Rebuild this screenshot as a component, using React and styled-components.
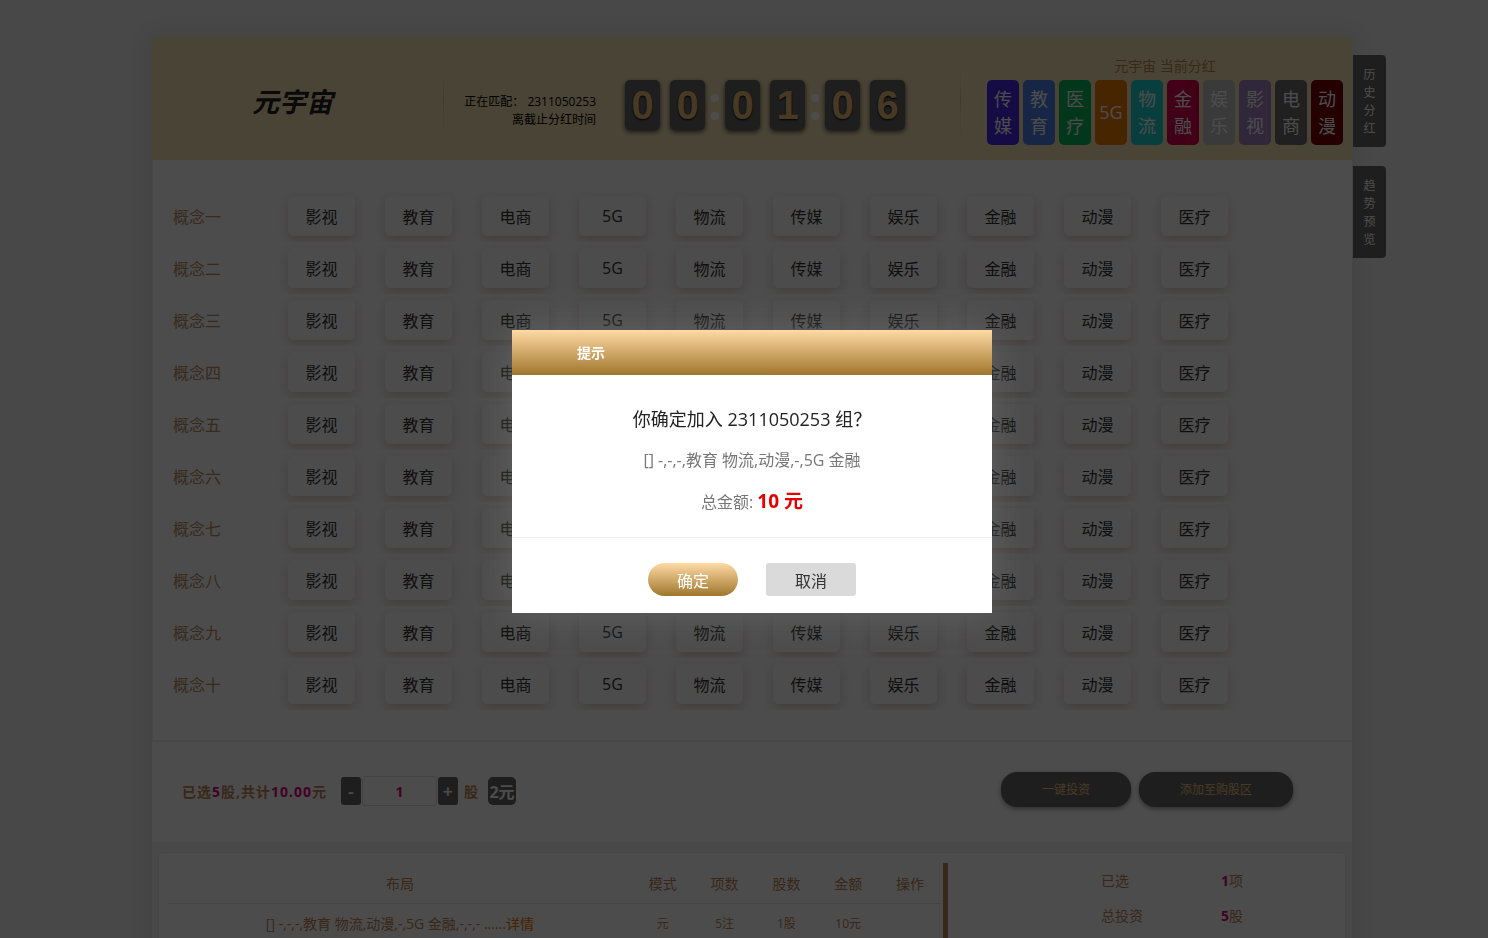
import React, { useState } from "react";
import styled, { createGlobalStyle } from "styled-components";

const concepts = ["一", "二", "三", "四", "五", "六", "七", "八", "九", "十"];
const sectors = ["影视", "教育", "电商", "5G", "物流", "传媒", "娱乐", "金融", "动漫", "医疗"];

const results = [
  { name: "传媒", color: "#4b28e8" },
  { name: "教育", color: "#4d80e8" },
  { name: "医疗", color: "#07b85c" },
  { name: "5G", color: "#ef7c00" },
  { name: "物流", color: "#1fcfcf" },
  { name: "金融", color: "#d9004f" },
  { name: "娱乐", color: "#c2c2c2" },
  { name: "影视", color: "#a583c4" },
  { name: "电商", color: "#6b6b6b" },
  { name: "动漫", color: "#780000" },
];

const App = () => {
  const [count, setCount] = useState(1);

  return (
    <>
      <GlobalStyle />
      <Page>
        <Main>
          <Header>
            <Logo>元宇宙</Logo>
            <Timer>
              <TimerText>
                正在匹配： 2311050253
                <br />
                离截止分红时间
              </TimerText>
              <Clock>
                <Digit>0</Digit>
                <Digit>0</Digit>
                <Dots />
                <Digit>0</Digit>
                <Digit>1</Digit>
                <Dots />
                <Digit>0</Digit>
                <Digit>6</Digit>
              </Clock>
            </Timer>
            <Current>
              <CurrentTitle>元宇宙 当前分红</CurrentTitle>
              <Results>
                {results.map((item) => (
                  <Result key={item.name} $color={item.color}>
                    {item.name}
                  </Result>
                ))}
              </Results>
            </Current>
          </Header>

          <Board>
            {concepts.map((num) => (
              <Row key={num}>
                <RowLabel>概念{num}</RowLabel>
                {sectors.map((name) => (
                  <Sector key={name} type="button">
                    {name}
                  </Sector>
                ))}
              </Row>
            ))}
          </Board>

          <Controls>
            <Summary>
              已选<Pink>5</Pink>股,共计<Pink>10.00</Pink>元
            </Summary>
            <Stepper>
              <Step type="button" onClick={() => setCount(Math.max(1, count - 1))}>
                -
              </Step>
              <Count
                type="text"
                aria-label="股"
                value={count}
                onChange={(e) => setCount(Number(e.target.value) || 1)}
              />
              <Step type="button" onClick={() => setCount(count + 1)}>
                +
              </Step>
            </Stepper>
            <Unit>股</Unit>
            <Price type="button">2元</Price>
            <Actions>
              <Action type="button">一键投资</Action>
              <Action type="button">添加至购股区</Action>
            </Actions>
          </Controls>

          <Cart>
            <CartInner>
              <Table>
                <thead>
                  <tr>
                    <th className="wide">布局</th>
                    <th>模式</th>
                    <th>项数</th>
                    <th>股数</th>
                    <th>金额</th>
                    <th>操作</th>
                  </tr>
                </thead>
                <tbody>
                  <tr>
                    <td className="wide">
                      [] -,-,-,教育 物流,动漫,-,5G 金融,-,-,- ......<a href="#detail">详情</a>
                    </td>
                    <td>元</td>
                    <td>5注</td>
                    <td>1股</td>
                    <td>10元</td>
                    <td></td>
                  </tr>
                </tbody>
              </Table>
              <Totals>
                <dt>已选</dt>
                <dd>
                  <Pink>1</Pink>项
                </dd>
                <dt>总投资</dt>
                <dd>
                  <Pink>5</Pink>股
                </dd>
              </Totals>
            </CartInner>
          </Cart>
        </Main>

        <Side>
          <SideTab type="button">历史分红</SideTab>
          <SideTab type="button">趋势预览</SideTab>
        </Side>
      </Page>

      <Overlay>
        <Dialog role="dialog" aria-labelledby="dialog-title">
          <DialogHead id="dialog-title">提示</DialogHead>
          <DialogBody>
            <h3>你确定加入 2311050253 组？</h3>
            <p>[] -,-,-,教育 物流,动漫,-,5G 金融</p>
            <p>
              总金额: <strong>10 元</strong>
            </p>
          </DialogBody>
          <DialogFoot>
            <DialogButton type="button" $primary>
              确定
            </DialogButton>
            <DialogButton type="button">取消</DialogButton>
          </DialogFoot>
        </Dialog>
      </Overlay>
    </>
  );
};

export default App;

const GlobalStyle = createGlobalStyle`
  * {
    box-sizing: border-box;
  }

  body {
    margin: 0;
    overflow: hidden;
    background: #f0f0f0;
    color: #333;
    font-family: "Open Sans", "Noto Sans CJK SC", sans-serif;
    font-size: 14px;
  }

  button,
  input {
    padding: 0;
    border: 0;
    font-family: inherit;
  }

  h1, h2, h3, p, dl, dd {
    margin: 0;
  }
`;

/* no scrolling behind the open dialog */
const Page = styled.div`
  display: grid;
  grid-template-columns: 1fr minmax(0, 1200px) 1fr;
  align-items: start;
  height: 100vh;
  padding: 37px 0 0 16px;
  overflow: hidden;
`;

const Main = styled.main`
  grid-column: 2;
  background: #fff;
  box-shadow: 0 0 20px rgba(150, 90, 90, 0.2);
`;

const Header = styled.header`
  display: flex;
  height: 123px;
  background: #f8e5b5;
`;

const Logo = styled.h1`
  width: 291px;
  padding-left: 100px;
  color: #222;
  font-size: 27px;
  font-style: italic;
  line-height: 130px;
`;

const Timer = styled.div`
  flex: 1;
  display: flex;
  padding: 43px 0 0 18px;
  border-style: solid;
  border-width: 0 1px;
  border-image: linear-gradient(transparent 25%, #d8c79c 50%, transparent 85%) 1;
`;

const TimerText = styled.p`
  width: 134px;
  margin-top: 13px;
  color: #000;
  font-size: 12px;
  line-height: 18px;
  text-align: right;
  white-space: nowrap;
`;

const Clock = styled.div`
  display: flex;
  margin-left: 24px;
`;

const Digit = styled.span`
  width: 35px;
  height: 50px;
  margin: 0 5px;
  border-radius: 5px;
  background: #666;
  box-shadow: 0 2px 5px rgba(0, 0, 0, 0.7);
  color: #f0be78;
  font: bold 40px/50px "Liberation Sans", sans-serif;
  text-align: center;
  text-shadow: 0 1px 2px #000;
`;

const Dots = styled.span`
  display: flex;
  flex-direction: column;
  align-items: center;
  gap: 10px;
  width: 10px;
  padding-top: 14px;

  &::before,
  &::after {
    content: "";
    width: 8px;
    height: 8px;
    border-radius: 50%;
    background: #fff;
  }
`;

const Current = styled.section`
  width: 391px;
  padding: 18px 0 0 26px;
`;

const CurrentTitle = styled.h2`
  width: 356px;
  margin-bottom: 4px;
  color: #c08458;
  font-size: 14px;
  font-weight: normal;
  line-height: 21px;
  text-align: center;
`;

const Results = styled.div`
  display: flex;
  gap: 4px;
`;

const Result = styled.span`
  display: flex;
  align-items: center;
  justify-content: center;
  width: 32px;
  height: 65px;
  padding: 0 4px;
  border-radius: 5px;
  background: ${(props) => props.$color};
  color: #fff;
  font-size: 18px;
  line-height: 27px;
  text-align: center;
`;

const Board = styled.section`
  padding: 30px 20px;
  border-left: 1px solid #eee;
  border-bottom: 2px solid #eee;
`;

const Row = styled.div`
  display: flex;
  gap: 30px;
  height: 52px;
  padding-top: 6px;
  overflow: hidden;
`;

const RowLabel = styled.span`
  width: 85px;
  color: #c08c64;
  font-size: 16px;
  line-height: 42px;
`;

const Sector = styled.button`
  width: 67px;
  height: 40px;
  border-radius: 5px;
  background: #fff;
  box-shadow: 0 4px 12px rgba(130, 40, 40, 0.24);
  color: #333;
  font-size: 16px;
`;

const Controls = styled.section`
  display: flex;
  align-items: center;
  height: 100px;
  padding: 0 59px 2px 30px;
`;

const Summary = styled.span`
  width: 159px;
  color: #c08458;
  font-weight: bold;
  letter-spacing: 1px;
  white-space: nowrap;
`;

const Pink = styled.b`
  color: #d9007a;
  font-weight: 700;
`;

const Stepper = styled.div`
  display: flex;
  align-items: center;
  gap: 1px;
`;

const Step = styled.button`
  width: 20px;
  height: 28px;
  border-radius: 3px;
  background: #666;
  color: #fff;
  font-size: 18px;
  font-weight: 600;
  line-height: 28px;
`;

const Count = styled.input`
  width: 75px;
  height: 30px;
  border: 1px solid #ddd;
  border-radius: 3px;
  background: #fff;
  color: #d9007a;
  font-size: 14px;
  font-weight: bold;
  text-align: center;
`;

const Unit = styled.span`
  margin: 0 10px 0 6px;
  color: #c08458;
  font-weight: bold;
`;

const Price = styled.button`
  width: 28px;
  height: 28px;
  border-radius: 5px;
  background: #666;
  color: #fff;
  font-size: 16px;
  font-weight: bold;
  white-space: nowrap;
`;

const Actions = styled.div`
  display: flex;
  gap: 8px;
  margin: 0 0 4px auto;
`;

const Action = styled.button`
  height: 35px;
  padding: 0 41px;
  border-radius: 16px;
  background: #666;
  box-shadow: 0 2px 5px rgba(0, 0, 0, 0.4);
  color: #f0c27c;
  font-size: 12px;
`;

const Cart = styled.section`
  padding: 10px 6px;
  background: #f3f3f8;
`;

const CartInner = styled.div`
  display: flex;
  min-height: 200px;
  padding: 10px 9px;
  border: 1px solid #e8e8f0;
  border-radius: 5px;
  background: #fff;
`;

const Table = styled.table`
  flex: 1;
  align-self: flex-start;
  table-layout: fixed;
  border-collapse: collapse;
  color: #c08458;
  text-align: center;

  th,
  td {
    width: 8%;
    height: 40px;
    padding: 0;
    border-bottom: 1px solid #e6e6e6;
    font-size: 12px;
    font-weight: normal;
    white-space: nowrap;
  }

  th,
  .wide {
    font-size: 14px;
  }

  .wide {
    width: 60%;
  }

  a {
    color: #e87400;
    text-decoration: none;
  }
`;

const Totals = styled.dl`
  display: grid;
  grid-template-columns: 120px 1fr;
  align-content: start;
  width: 393px;
  margin-left: 2px;
  padding-left: 153px;
  border-left: 5px solid #c08458;
  color: #c08458;
  line-height: 35px;
`;

const Side = styled.aside`
  display: flex;
  flex-direction: column;
  align-items: flex-start;
  gap: 19px;
  padding: 18px 0 0 1px;
`;

const SideTab = styled.button`
  width: 33px;
  padding: 11px 10px 9px;
  border-radius: 0 4px 4px 0;
  background: #666;
  color: #fff;
  font-size: 12px;
  line-height: 18px;
`;

const Overlay = styled.div`
  position: fixed;
  inset: 0;
  display: flex;
  align-items: center;
  justify-content: center;
  padding: 5px 0 0 16px;
  background: rgba(0, 0, 0, 0.7);
`;

const Dialog = styled.div`
  width: 480px;
  background: #fff;
  box-shadow: 0 0 36px rgba(112, 112, 112, 0.65);
  text-align: center;
`;

const DialogHead = styled.h2`
  padding-left: 65px;
  background: linear-gradient(#ffdaa6, #a0762c);
  color: #fff;
  font-size: 14px;
  line-height: 45px;
  text-align: left;
`;

const DialogBody = styled.div`
  padding: 24px 0 15px;
  border-bottom: 1px solid #eee;
  color: #777;
  font-size: 16px;
  line-height: 41px;

  h3 {
    color: #222;
    font-size: 18px;
    font-weight: normal;
  }

  p {
    height: 41px;
  }

  strong {
    color: #e60000;
    font-size: 19px;
  }
`;

const DialogFoot = styled.div`
  display: flex;
  justify-content: center;
  gap: 28px;
  padding: 25px 0 17px;
`;

const DialogButton = styled.button`
  width: 90px;
  height: 33px;
  border-radius: ${(props) => (props.$primary ? "17px" : "3px")};
  background: ${(props) => (props.$primary ? "linear-gradient(#ffdaa6, #a0762c)" : "#dadada")};
  color: ${(props) => (props.$primary ? "#fff" : "#333")};
  font-size: 16px;
`;
